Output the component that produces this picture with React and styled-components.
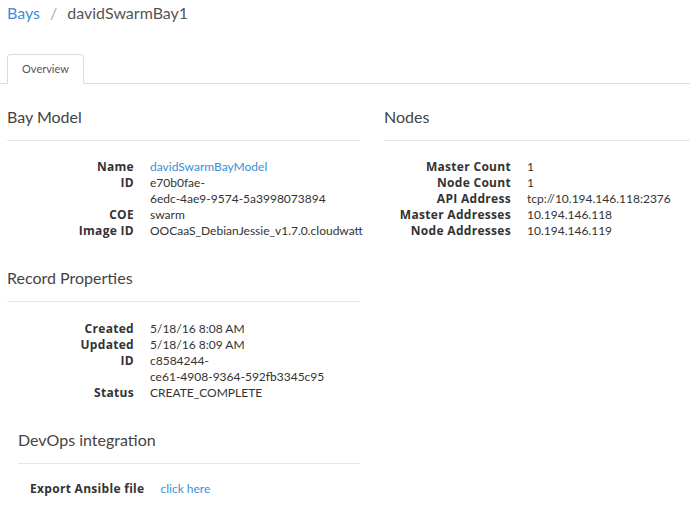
import styled, { createGlobalStyle } from "styled-components";

const Global = createGlobalStyle`
  html, body { margin: 0; padding: 0; background: #fff; }
  body {
    font-family: Lato, "Open Sans", sans-serif;
    font-size: 12px;
    color: #333;
  }
`

const Page = styled.div`
  padding: 0 0 0 7px;
`

const Crumbs = styled.div`
  display: flex;
  align-items: baseline;
  height: 30px;
  padding-top: 3px;
  font-size: 16px;
  color: #555;
`

const CrumbLink = styled.a`
  color: #3a8fd8;
  text-decoration: none;
`

const Sep = styled.span`
  color: #aaa;
  margin: 0 10px 0 10px;
`

const Tabs = styled.div`
  display: flex;
  margin: 21px 0 0 -7px;
  padding-left: 7px;
  border-bottom: 1px solid #ddd;
`

const Tab = styled.div`
  width: 75px;
  height: 28px;
  line-height: 28px;
  text-align: center;
  font-size: 11px;
  color: #555;
  border: 1px solid #ddd;
  border-bottom-color: #fff;
  border-radius: 4px 4px 0 0;
  margin-bottom: -1px;
  background: #fff;
`

const Columns = styled.div`
  display: grid;
  grid-template-columns: 353px 1fr;
  column-gap: 24px;
`

const Section = styled.div`
  padding-left: ${p => p.$indent || 0}px;
`

const Heading = styled.h3`
  margin: 0;
  padding-top: ${p => p.$top || 22}px;
  font-size: 16px;
  font-weight: normal;
  line-height: 22px;
  color: #444;
`

const Rule = styled.hr`
  border: 0;
  border-top: 1px solid #e6e6e6;
  margin: 12px 0 ${p => p.$after || 18}px;
`

const Dl = styled.dl`
  display: grid;
  grid-template-columns: 127px 1fr;
  column-gap: 16px;
  margin: 0;
  line-height: 16px;
`

const Dt = styled.dt`
  text-align: right;
  font-family: "Open Sans", sans-serif;
  font-weight: bold;
  letter-spacing: 0.3px;
  color: #333;
  white-space: nowrap;
`

const Dd = styled.dd`
  margin: 0;
  color: #333;
  white-space: ${p => (p.$nowrap ? "nowrap" : "normal")};
`

const NoBreak = styled.span`
  white-space: nowrap;
`

const ValueLink = styled.a`
  color: #3a8fd8;
  text-decoration: none;
`

const ExportRow = styled.div`
  display: flex;
  align-items: baseline;
  gap: 16px;
  padding-left: 12px;
  line-height: 16px;
`

const ExportLabel = styled.span`
  font-family: "Open Sans", sans-serif;
  font-weight: bold;
  letter-spacing: 0.3px;
  color: #333;
`

// uuids wrap after their first hyphen only, like the reference
function Uuid({ value }) {
  const i = value.indexOf("-") + 1
  return <>{value.slice(0, i)}<NoBreak>{value.slice(i)}</NoBreak></>
}

function Props({ rows }) {
  return (
    <Dl>
      {rows.map(([k, v]) => [
        <Dt key={k + "t"}>{k}</Dt>,
        <Dd key={k + "d"} $nowrap={v.nowrap}>
          {v.link ? <ValueLink href="#">{v.text}</ValueLink> : v.uuid ? <Uuid value={v.text} /> : v.text}
        </Dd>,
      ])}
    </Dl>
  )
}

export default function App() {
  const bayModel = [
    ["Name", { text: "davidSwarmBayModel", link: true }],
    ["ID", { text: "e70b0fae-6edc-4ae9-9574-5a3998073894", uuid: true }],
    ["COE", { text: "swarm" }],
    ["Image ID", { text: "OOCaaS_DebianJessie_v1.7.0.cloudwatt", nowrap: true }],
  ]
  const nodes = [
    ["Master Count", { text: "1" }],
    ["Node Count", { text: "1" }],
    ["API Address", { text: "tcp://10.194.146.118:2376" }],
    ["Master Addresses", { text: "10.194.146.118" }],
    ["Node Addresses", { text: "10.194.146.119" }],
  ]
  const record = [
    ["Created", { text: "5/18/16 8:08 AM" }],
    ["Updated", { text: "5/18/16 8:09 AM" }],
    ["ID", { text: "c8584244-ce61-4908-9364-592fb3345c95", uuid: true }],
    ["Status", { text: "CREATE_COMPLETE" }],
  ]

  return (
    <Page>
      <Global />
      <Crumbs>
        <CrumbLink href="#">Bays</CrumbLink>
        <Sep>/</Sep>
        <span>davidSwarmBay1</span>
      </Crumbs>
      <Tabs>
        <Tab>Overview</Tab>
      </Tabs>
      <Columns>
        <div>
          <Section>
            <Heading>Bay Model</Heading>
            <Rule />
            <Props rows={bayModel} />
          </Section>
          <Section>
            <Heading $top={28}>Record Properties</Heading>
            <Rule $after={19} />
            <Props rows={record} />
          </Section>
          <Section $indent={11}>
            <Heading $top={28}>DevOps integration</Heading>
            <Rule $after={17} />
            <ExportRow>
              <ExportLabel>Export Ansible file</ExportLabel>
              <ValueLink href="#">click here</ValueLink>
            </ExportRow>
          </Section>
        </div>
        <div>
          <Section>
            <Heading>Nodes</Heading>
            <Rule />
            <Props rows={nodes} />
          </Section>
        </div>
      </Columns>
    </Page>
  )
}
